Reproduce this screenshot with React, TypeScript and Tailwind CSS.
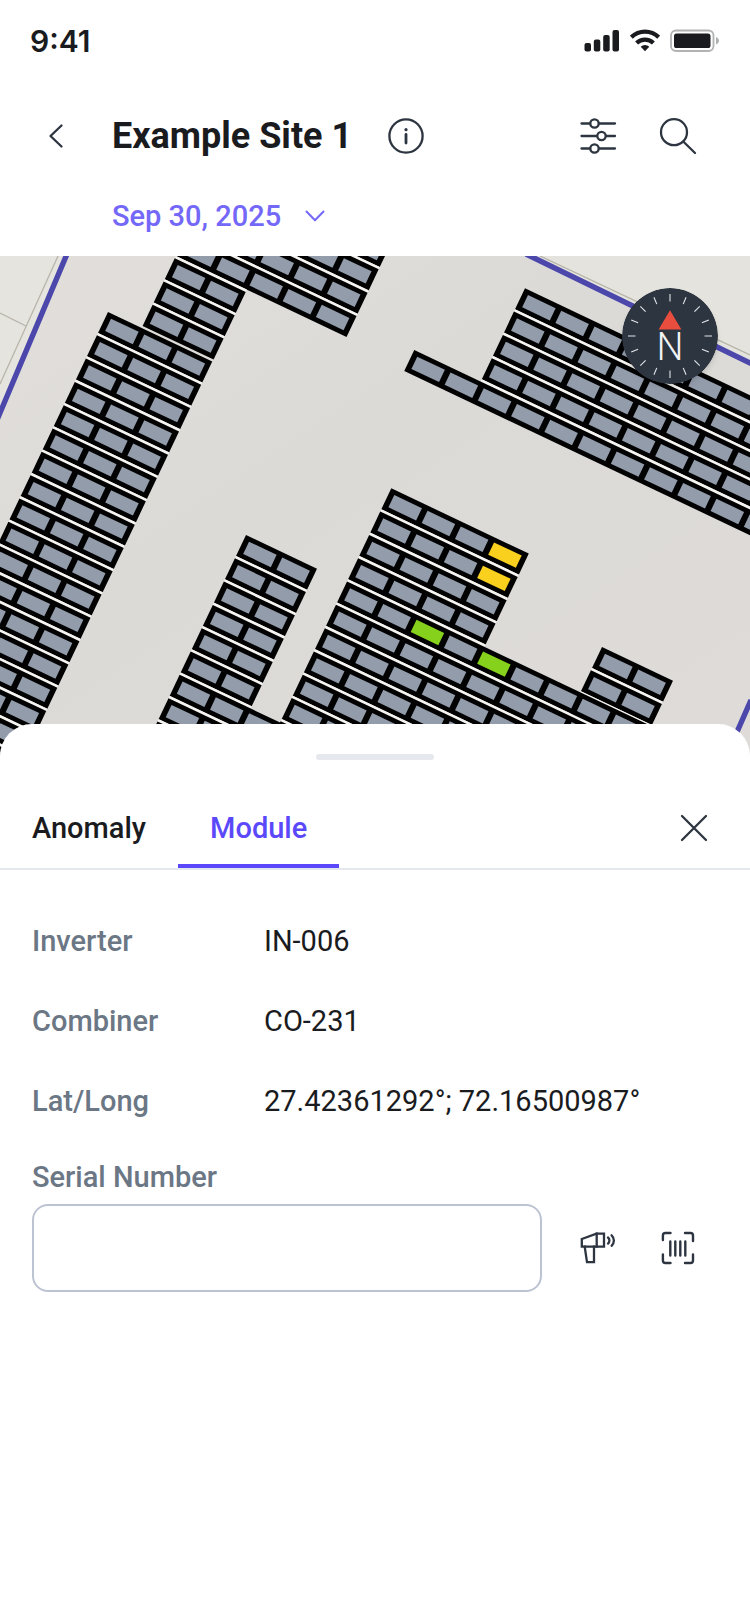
import { useState } from 'react';

type Block = {
  x: number;
  y: number;
  // [first column, number of columns] for each row
  rows: [number, number][];
  marks?: Record<string, string>;
};

const ANGLE = 25.4;
const COL = 36.8;
const ROW = 25.8;

const repeat = (n: number, start: number, count: number): [number, number][] =>
  Array.from({ length: n }, () => [start, count]);

const blocks: Block[] = [
  { x: 219, y: 165, rows: [...repeat(4, 0, 5), ...repeat(3, 0, 2)] },
  { x: 108, y: 312, rows: repeat(18, 0, 3) },
  { x: 246, y: 535, rows: [...repeat(6, 0, 2), ...repeat(4, 0, 3)] },
  { x: 602, y: 647, rows: repeat(3, 0, 2) },
  {
    x: 391.3,
    y: 488.3,
    rows: [...repeat(4, 0, 4), ...repeat(8, 0, 9)],
    marks: { '0-3': '#fad01e', '1-3': '#fad01e', '4-2': '#86d11c', '4-4': '#86d11c' },
  },
  { x: 525, y: 288.3, rows: [...repeat(4, 0, 8), [-2, 12]] },
];

function PanelBlock({ block }: { block: Block }) {
  return (
    <g transform={`translate(${block.x} ${block.y}) rotate(${ANGLE})`}>
      {block.rows.map(([start, count], r) => {
        // the seam only runs where this row touches the one above
        const [aboveStart, aboveCount] = block.rows[r - 1] ?? [start, 0];
        const from = Math.max(start, aboveStart);
        const to = Math.min(start + count, aboveStart + aboveCount);
        return (
          <g key={r} transform={`translate(0 ${r * ROW})`}>
            {to > from && (
              <rect x={from * COL} y="-2.6" width={(to - from) * COL + 5} height="2.6" fill="#f6f4f1" />
            )}
            <rect x={start * COL} width={count * COL + 5} height="23.3" fill="#020203" />
            {Array.from({ length: count }, (_, c) => (
              <rect
                key={c}
                x={(start + c) * COL + 5.6}
                y="4.8"
                width="30.6"
                height="13.6"
                fill={block.marks?.[`${r}-${c + start}`] ?? '#939cab'}
              />
            ))}
          </g>
        );
      })}
    </g>
  );
}

function SiteMap() {
  return (
    <svg
      viewBox="0 256 750 500"
      preserveAspectRatio="xMidYMin slice"
      className="block h-[500px] w-full"
      role="img"
      aria-label="Site map"
    >
      <defs>
        <linearGradient id="ground" x1="0" y1="0" x2="1" y2="1">
          <stop offset="0" stopColor="#e2dfdb" />
          <stop offset="0.4" stopColor="#dcdad7" />
          <stop offset="1" stopColor="#dedbd8" />
        </linearGradient>
      </defs>
      <rect y="256" width="750" height="500" fill="url(#ground)" />
      <path d="M0 256H65L0 417Z" fill="#e6e4de" />
      <path d="M528 256H750V363Z" fill="#e4e3de" />
      <path d="M58 256L0 384M0 313L26 326" stroke="#b9b4ab" strokeWidth="1.3" fill="none" />
      <path d="M540 256L750 355" stroke="#b5b2a6" strokeWidth="1.3" />
      <path d="M67 254L-3 420M526 254L752 364M751 700L726 757" stroke="#4b47ab" strokeWidth="5.4" fill="none" />
      {blocks.map((block) => (
        <PanelBlock key={`${block.x}-${block.y}`} block={block} />
      ))}
    </svg>
  );
}

function Compass() {
  return (
    <svg viewBox="-48 -48 96 96" className="size-24 rounded-full shadow-md" role="img" aria-label="Compass">
      <circle r="48" fill="#2d3540" />
      {Array.from({ length: 16 }, (_, i) => (
        <line key={i} y1="-42" y2="-34.5" stroke="#e3e6ea" strokeWidth="1.1" transform={`rotate(${i * 22.5})`} />
      ))}
      <path d="M0 -25.8L11.4 -6.6H-11.4Z" fill="#e94d3d" />
      <text y="24" textAnchor="middle" fill="#f1f3f5" className="font-[Roboto,sans-serif] text-[38px] font-light">
        N
      </text>
    </svg>
  );
}

function StatusIcons() {
  return (
    <div className="flex items-center gap-2.5" aria-hidden="true">
      <svg width="36" height="24" viewBox="0 0 36 24" fill="#1a1b1e">
        <rect x="0.5" y="14" width="6.5" height="8.5" rx="2" />
        <rect x="9.8" y="10.5" width="6.5" height="12" rx="2" />
        <rect x="19.2" y="6" width="6.5" height="16.5" rx="2" />
        <rect x="28.5" y="1" width="6.5" height="21.5" rx="2" />
      </svg>
      <svg width="30" height="24" viewBox="0 0 30 24" fill="none" stroke="#1a1b1e" strokeWidth="4.2">
        <path d="M1.3 8.2A19.6 19.6 0 0 1 28.7 8.2" />
        <path d="M6.6 14A12 12 0 0 1 23.4 14" />
        <path d="M15 22.2L10.7 17.8A6.2 6.2 0 0 1 19.3 17.8Z" fill="#1a1b1e" stroke="none" />
      </svg>
      <svg width="50" height="24" viewBox="0 0 50 24">
        <rect x="1" y="1.5" width="42.5" height="20.5" rx="5" fill="none" stroke="#b1b2b3" strokeWidth="1.8" />
        <rect x="4" y="4.5" width="36.5" height="14.5" rx="2.6" fill="#1a1b1e" />
        <path d="M46 8C48.3 9 49 10.4 49 11.8S48.3 14.6 46 15.6Z" fill="#b1b2b3" />
      </svg>
    </div>
  );
}

const iconProps = {
  viewBox: '0 0 48 48',
  className: 'size-12',
  fill: 'none',
  stroke: '#2d3540',
  strokeWidth: 2.3,
  strokeLinecap: 'round' as const,
  strokeLinejoin: 'round' as const,
};

const fields = [
  { label: 'Inverter', value: 'IN-006' },
  { label: 'Combiner', value: 'CO-231' },
  { label: 'Lat/Long', value: '27.42361292°; 72.16500987°' },
];

const tabs = ['Anomaly', 'Module'];

export default function App() {
  const [tab, setTab] = useState('Module');
  const [serial, setSerial] = useState('');

  return (
    <div className="min-h-screen bg-white font-[Roboto,sans-serif] text-[29px] leading-8 text-[#1a1b1e]">
      {/* Status bar */}
      <div className="flex h-[82px] items-center justify-between px-[30px]">
        <span className="font-[Inter,sans-serif] text-[30px] font-semibold">9:41</span>
        <StatusIcons />
      </div>

      <header className="pt-[30px] pb-6">
        <div className="flex items-center justify-between pr-12 pl-8">
          <div className="flex items-center gap-8">
            <button type="button" aria-label="Back">
              <svg {...iconProps}>
                <path d="M29.5 13.5L18.5 24L29.5 34.5" />
              </svg>
            </button>
            <div className="flex items-center gap-[30px]">
              <h1 className="text-4xl font-bold">Example Site 1</h1>
              <button type="button" aria-label="Site info">
                <svg {...iconProps}>
                  <circle cx="24" cy="24" r="16.6" />
                  <path d="M24 22.5V31" strokeWidth="2.8" />
                  <circle cx="24" cy="17.7" r="1.6" fill="#2d3540" stroke="none" />
                </svg>
              </button>
            </div>
          </div>
          <div className="flex gap-8">
            <button type="button" aria-label="Filters">
              <svg {...iconProps}>
                <path d="M7.5 11.5H16M25 11.5H41M7.5 24H23M32 24H41M7.5 36.5H16M25 36.5H41" />
                <circle cx="20.5" cy="11.5" r="4.2" />
                <circle cx="27.5" cy="24" r="4.2" />
                <circle cx="20.5" cy="36.5" r="4.2" />
              </svg>
            </button>
            <button type="button" aria-label="Search">
              <svg {...iconProps}>
                <circle cx="20" cy="20.2" r="13" />
                <path d="M29.5 29.8L41 41" />
              </svg>
            </button>
          </div>
        </div>
        <button type="button" className="mt-10 ml-28 flex items-center gap-5 font-medium text-[#7468f8]">
          Sep 30, 2025
          <svg
            viewBox="0 0 28 32"
            className="h-8 w-7"
            fill="none"
            stroke="currentColor"
            strokeWidth="2"
            strokeLinecap="round"
            strokeLinejoin="round"
          >
            <path d="M5.5 11.5L14 20.3L22.5 11.5" />
          </svg>
        </button>
      </header>

      <div className="relative">
        <SiteMap />
        <div className="absolute top-8 right-8">
          <Compass />
        </div>
      </div>

      {/* Bottom sheet */}
      <section className="relative -mt-8 rounded-t-[32px] bg-white pt-[30px]">
        <div className="mx-auto h-1.5 w-[118px] rounded-full bg-[#e5e9ed]" />

        <div className="mt-7 flex items-center justify-between border-b-2 border-[#e5e9ed] pr-8">
          <div role="tablist" className="flex">
            {tabs.map((name) => (
              <button
                key={name}
                type="button"
                role="tab"
                aria-selected={tab === name}
                onClick={() => setTab(name)}
                className={`border-b-4 px-8 pt-6 pb-5 font-medium ${
                  tab === name ? 'border-[#5a48fa] text-[#5a48fa]' : 'border-transparent'
                }`}
              >
                {name}
              </button>
            ))}
          </div>
          <button type="button" aria-label="Close">
            <svg {...iconProps}>
              <path d="M12 12L36 36M36 12L12 36" />
            </svg>
          </button>
        </div>

        <dl className="flex flex-col gap-12 px-8 pt-[55px]">
          {fields.map(({ label, value }) => (
            <div key={label} className="flex">
              <dt className="w-58 font-medium text-[#6b7785]">{label}</dt>
              <dd>{value}</dd>
            </div>
          ))}
        </dl>

        <div className="pt-11 pr-12 pb-8 pl-8">
          <label htmlFor="serial" className="block font-medium text-[#6b7785]">
            Serial Number
          </label>
          <div className="mt-[11px] flex items-center gap-8">
            <input
              id="serial"
              value={serial}
              onChange={(e) => setSerial(e.target.value)}
              className="h-22 min-w-0 flex-1 rounded-2xl border-2 border-[#bcc3d2] px-6 outline-none"
            />
            <button type="button" aria-label="Scan with reader">
              <svg {...iconProps} strokeLinecap="square" strokeLinejoin="miter">
                <path d="M7.8 15L22.5 9.6H30V22.6H7.8Z" />
                <path d="M22.7 9.6V22.6" />
                <path d="M10.7 22.6L13 38.2H20V22.6" />
                <path d="M34 13.5A4 4 0 0 1 34 19.6M37.6 11.3A7.2 7.2 0 0 1 37.6 21.8" strokeLinecap="round" />
              </svg>
            </button>
            <button type="button" aria-label="Scan barcode">
              <svg {...iconProps} strokeWidth="2.4">
                <path d="M8.9 16V11.5Q8.9 9 11.4 9H16.5M31 9H36.5Q39 9 39 11.5V17M39 30.5V36.5Q39 39 36.5 39H31M16.5 39H11.4Q8.9 39 8.9 36.5V30.5" />
                <path d="M16.3 17.5V31.5M21.3 17.5V31.5M26.3 17.5V31.5M31.3 17.5V31.5" />
              </svg>
            </button>
          </div>
        </div>
      </section>
    </div>
  );
}
